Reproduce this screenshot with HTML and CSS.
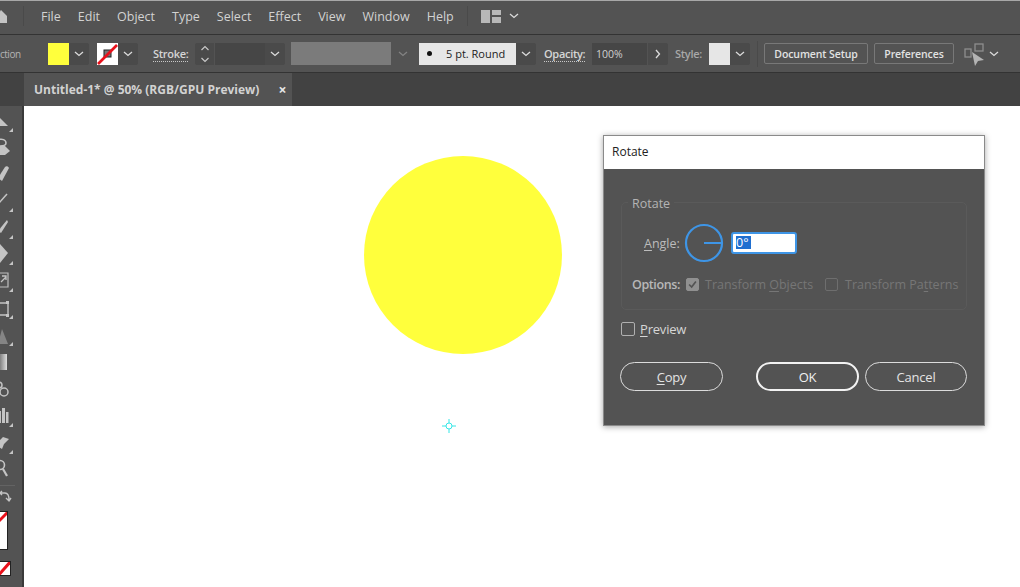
FILE: index.html
```html
<!DOCTYPE html>
<html lang="en">
<head>
<meta charset="utf-8">
<title>Rotate</title>
<link rel="stylesheet" href="styles.css">
</head>
<body>
<div class="app">
  <header class="menubar">
    <svg class="home" width="8" height="16" viewBox="0 0 8 16"><path d="M-4 8 L1 2 L7 8 L7 15 L-4 15 Z" fill="#c4c4c4"/></svg>
    <span class="vsep menu-sep"></span>
    <nav class="menu">
      <span>File</span><span>Edit</span><span>Object</span><span>Type</span><span>Select</span><span>Effect</span><span>View</span><span>Window</span><span>Help</span>
    </nav>
    <span class="vsep layout-sep"></span>
    <svg class="layout-icon" width="20" height="13" viewBox="0 0 20 13"><path d="M0 0h9v13H0z" fill="#b8b8b8"/><path d="M11 0h9v5h-9zM11 7h9v6h-9z" fill="#b8b8b8"/></svg>
    <svg class="chev layout-chev" width="10" height="6" viewBox="0 0 10 6"><path d="M1 1l4 3.5L9 1" /></svg>
  </header>

  <div class="controlbar">
    <span class="clip-label">ction</span>
    <div class="combo c-fill">
      <span class="swatch yellow"></span>
      <span class="drop"><svg class="chev" width="10" height="6" viewBox="0 0 10 6"><path d="M1 1l4 3.5L9 1"/></svg></span>
    </div>
    <div class="combo c-stroke">
      <span class="swatch none-swatch">
        <svg width="21" height="22" viewBox="0 0 21 22"><rect x="7" y="7" width="7" height="7" fill="#777" stroke="#222"/><path d="M1 21L20 2" stroke="#e8111b" stroke-width="2.600"/></svg>
      </span>
      <span class="drop"><svg class="chev" width="10" height="6" viewBox="0 0 10 6"><path d="M1 1l4 3.5L9 1"/></svg></span>
    </div>
    <span class="link-label stroke-label">Stroke:</span>
    <div class="combo c-weight">
      <span class="spin"><svg width="10" height="20" viewBox="0 0 10 20"><path d="M1.500 6L5 2.500 8.500 6M1.500 14L5 17.500 8.500 14" fill="none" stroke="#c8c8c8" stroke-width="1.200"/></svg></span>
      <span class="field weight-field"></span>
      <span class="drop"><svg class="chev" width="10" height="6" viewBox="0 0 10 6"><path d="M1 1l4 3.5L9 1"/></svg></span>
    </div>
    <div class="profile"></div>
    <svg class="chev dim-chev" width="10" height="6" viewBox="0 0 10 6"><path d="M1 1l4 3.5L9 1"/></svg>
    <div class="combo c-brush">
      <span class="brush"><i class="dot"></i><b>5 pt. Round</b></span>
      <span class="drop"><svg class="chev" width="10" height="6" viewBox="0 0 10 6"><path d="M1 1l4 3.5L9 1"/></svg></span>
    </div>
    <span class="link-label opacity-label">Opacity:</span>
    <div class="combo c-opacity">
      <span class="field opacity-field">100%</span>
      <span class="drop"><svg width="6" height="10" viewBox="0 0 6 10"><path d="M1 1l3.500 4L1 9" fill="none" stroke="#dcdcdc" stroke-width="1.300"/></svg></span>
    </div>
    <span class="plain-label">Style:</span>
    <div class="combo c-style">
      <span class="swatch style-swatch"></span>
      <span class="drop"><svg class="chev" width="10" height="6" viewBox="0 0 10 6"><path d="M1 1l4 3.5L9 1"/></svg></span>
    </div>
    <span class="vsep ctl-sep"></span>
    <button class="ctl-btn doc-btn">Document Setup</button>
    <button class="ctl-btn pref-btn">Preferences</button>
    <svg class="arrange" width="22" height="24" viewBox="0 0 22 24"><g fill="none" stroke="#8e8e8e" stroke-width="1.300"><rect x="1" y="6" width="6" height="8"/><rect x="11" y="1" width="8" height="7"/></g><path d="M8 9l12 8-6 1-3 5z" fill="#b4b4b4"/></svg>
    <svg class="chev arrange-chev" width="10" height="6" viewBox="0 0 10 6"><path d="M1 1l4 3.5L9 1"/></svg>
  </div>

  <div class="tabbar">
    <div class="tab"><span class="tab-title">Untitled-1* @ 50% (RGB/GPU Preview)</span><span class="tab-close">×</span></div>
  </div>

  <div class="workspace">
    <aside class="toolbar">
      <svg class="tool" viewBox="0 0 22 27"><path d="M-2 10l10 10H-2z" class="f"/><path class="tri" d="M13 22v4h-4z"/></svg>
      <svg class="tool" viewBox="0 0 22 27"><path d="M-2 13c0 0 5 0 7 0l5 5-5 4-7 0z" class="f"/><path d="M-2 7c4-2 8 0 8 3s-4 3-6 3" fill="none" stroke="#c4c4c4" stroke-width="1.500"/></svg>
      <svg class="tool" viewBox="0 0 22 27"><path d="M-2 18L5 7c1-1 3-1 4 1l-7 13z" class="f"/></svg>
      <svg class="tool" viewBox="0 0 22 27"><path d="M-2 17L7 7" fill="none" stroke="#c4c4c4" stroke-width="1.500"/><path class="tri" d="M13 21v4h-4z"/></svg>
      <svg class="tool" viewBox="0 0 22 27"><path d="M-2 17L7 6l1 2-7 11z" class="f"/><path class="tri" d="M13 21v4h-4z"/></svg>
      <svg class="tool" viewBox="0 0 22 27"><path d="M0 3l8 9-8 10-4-10z" class="f"/><path class="tri" d="M13 20v4h-4z"/></svg>
      <svg class="tool" viewBox="0 0 22 27"><path d="M-2 5h10v14H-2z" fill="none" stroke="#bdbdbd" stroke-width="1.200"/><path d="M1 14l5-5M2 8h4v4" fill="none" stroke="#c4c4c4" stroke-width="1.300"/><path class="tri" d="M13 20v4h-4z"/></svg>
      <svg class="tool" viewBox="0 0 22 27"><path d="M-2 8h10v12H-2z" fill="none" stroke="#c4c4c4" stroke-width="1.400"/><path d="M6 6h3v3H6zM6 19h3v3H6z" class="f"/><path class="tri" d="M13 20v4h-4z"/></svg>
      <svg class="tool" viewBox="0 0 22 27"><path d="M-2 22L2 7l6 15z" fill="#858585"/><path class="tri" d="M13 20v4h-4z"/></svg>
      <svg class="tool" viewBox="0 0 22 27"><defs><linearGradient id="g1"><stop offset="0" stop-color="#666"/><stop offset="1" stop-color="#ddd"/></linearGradient></defs><path d="M-2 5h9v16H-2z" fill="url(#g1)"/></svg>
      <svg class="tool" viewBox="0 0 22 27"><circle cx="4" cy="16" r="4" fill="none" stroke="#c4c4c4" stroke-width="1.500"/><circle cx="-1" cy="9" r="3" fill="none" stroke="#c4c4c4" stroke-width="1.500"/></svg>
      <svg class="tool" viewBox="0 0 22 27"><path d="M-1 8h2v12h-2zM2 5h3v15H2zM6 9h2.500v11H6z" class="f"/><path class="tri" d="M13 20v4h-4z"/></svg>
      <svg class="tool" viewBox="0 0 22 27"><path d="M-1 11L3 7l6 2-5 5-2 5-3-2z" class="f"/><path class="tri" d="M13 20v4h-4z"/></svg>
      <svg class="tool" viewBox="0 0 22 27"><circle cx="0" cy="8" r="4.500" fill="none" stroke="#c4c4c4" stroke-width="1.600"/><path d="M3 12l4 7" stroke="#c4c4c4" stroke-width="2.200"/></svg>
      <div class="tool-rule"></div>
      <svg class="swap" width="22" height="16" viewBox="0 0 22 16"><path d="M0 3h5c3 0 4 2 4 7M6 8l3 3 2-3M2 1L0 3l2 2" fill="none" stroke="#c4c4c4" stroke-width="1.400"/></svg>
      <div class="big-none"><svg width="8" height="38" viewBox="0 0 8 38"><path d="M-6 14L10-2" stroke="#e8111b" stroke-width="3"/></svg></div>
      <div class="small-none"><svg width="10" height="14" viewBox="0 0 10 14"><path d="M-3 15L11-1" stroke="#e8111b" stroke-width="3"/></svg></div>
    </aside>
    <div class="rule-edge"></div>
    <main class="canvas">
      <div class="circle"></div>
      <svg class="reticle" width="16" height="16" viewBox="0 0 16 16"><g fill="none" stroke="#35e6e6"><circle cx="8" cy="8" r="3"/><path d="M8 1v4M8 11v4M1 8h4M11 8h4"/></g></svg>
      <section class="dialog">
        <div class="dlg-title">Rotate</div>
        <div class="dlg-body">
          <div class="group">
            <span class="legend">Rotate</span>
            <div class="row angle-row">
              <label class="angle-label"><u>A</u>ngle:</label>
              <svg class="dial" width="40" height="40" viewBox="0 0 40 40"><circle cx="20" cy="20" r="18" fill="none" stroke="#3e95e6" stroke-width="2.200"/><path d="M20 20h18" stroke="#3e95e6" stroke-width="2"/></svg>
              <span class="angle-input"><span class="sel">0°</span></span>
            </div>
            <div class="row options-row">
              <span class="opt-label">Options:</span>
              <span class="check on"><svg width="11" height="11" viewBox="0 0 13 13"><path d="M2.500 6.500l3 3 5-6.500" fill="none" stroke="#535353" stroke-width="2"/></svg></span>
              <span class="opt-text obj">Transform <u>O</u>bjects</span>
              <span class="check off"></span>
              <span class="opt-text pat">Transform Pa<u>t</u>terns</span>
            </div>
          </div>
          <div class="row preview-row">
            <span class="check prev"></span>
            <span class="prev-text"><u>P</u>review</span>
          </div>
          <div class="row btn-row">
            <button class="pill copy"><u>C</u>opy</button>
            <button class="pill ok">OK</button>
            <button class="pill cancel">Cancel</button>
          </div>
        </div>
      </section>
    </main>
  </div>
</div>
</body>
</html>
```
FILE: styles.css
```css
* { box-sizing: border-box; }
html, body { margin: 0; height: 100%; }
body { font-family: "Open Sans", "Noto Sans", sans-serif; font-size: 12px; overflow: hidden; background: #fff; }
.app { width: 1020px; height: 587px; display: flex; flex-direction: column; overflow: hidden; }
u { text-underline-offset: 2px; }
.chev path { fill: none; stroke: #dcdcdc; stroke-width: 1.300; }

.menubar { height: 35px; flex: none; display: flex; align-items: center; background: #535353; border-top: 1px solid #a8a8a8; border-bottom: 1px solid #333; padding-bottom: 3px; color: #d2d2d2; font-size: 12.500px; }
.home { flex: none; }
.vsep { display: block; width: 1px; flex: none; background: #4a4a4a; }
.menu-sep { height: 20px; margin-left: 15px; }
.menu { display: flex; margin-left: 17px; gap: 17px; }
.layout-sep { height: 20px; margin-left: 13px; }
.layout-icon { margin-left: 13px; flex: none; }
.layout-chev { margin-left: 8px; flex: none; }

.controlbar { height: 38px; flex: none; display: flex; align-items: center; background: #535353; border-bottom: 1px solid #333; color: #d0d0d0; font-size: 11px; }
.clip-label { width: 20px; color: #b4b4b4; flex: none; white-space: nowrap; font-size: 10px; letter-spacing: -.5px; }
.combo { display: flex; height: 22px; flex: none; background: #4a4a4a; border-radius: 2px; }
.drop { width: 20px; display: flex; align-items: center; justify-content: center; }
.swatch { display: block; width: 21px; height: 22px; }
.yellow { background: #ffff3c; }
.c-fill { margin-left: 28px; }
.c-stroke { margin-left: 8px; }
.none-swatch { background: #fff; overflow: hidden; }
.none-swatch svg { display: block; }
.link-label { text-decoration: underline dotted #c8c8c8; text-underline-offset: 3px; color: #d6d6d6; flex: none; font-weight: 600; }
.stroke-label { margin-left: 15px; width: 36px; letter-spacing: -.3px; }
.c-weight { margin-left: 6px; }
.spin { width: 20px; display: flex; align-items: center; justify-content: center; border-right: 1px solid #535353; }
.field { display: block; background: #464646; }
.weight-field { width: 50px; }
.profile { width: 100px; height: 23px; margin-left: 6px; flex: none; background: #7b7b7b; }
.dim-chev { margin-left: 7px; flex: none; opacity: .35; }
.c-brush { margin-left: 11px; }
.brush { width: 97px; display: flex; align-items: center; background: #e6e6e6; color: #222; }
.dot { width: 5px; height: 5px; margin-left: 8px; border-radius: 50%; background: #111; flex: none; }
.brush b { margin-left: 14px; font-weight: 500; font-size: 11px; white-space: nowrap; }
.opacity-label { margin-left: 8px; width: 43px; letter-spacing: -.3px; }
.c-opacity { margin-left: 5px; }
.opacity-field { width: 56px; padding-left: 4px; line-height: 22px; border-right: 1px solid #535353; font-size: 10.500px; }
.plain-label { margin-left: 7px; width: 27px; color: #a8a8a8; flex: none; font-weight: 600; letter-spacing: -.3px; }
.c-style { margin-left: 7px; }
.style-swatch { background: #e6e6e6; }
.ctl-sep { height: 26px; margin-left: 7px; }
.ctl-btn { height: 21px; padding: 0; flex: none; background: transparent; border: 1px solid #787878; border-radius: 2px; color: #e2e2e2; font: 600 10.500px "Open Sans", sans-serif; letter-spacing: -.1px; }
.doc-btn { width: 104px; margin-left: 6px; }
.pref-btn { width: 80px; margin-left: 6px; }
.arrange { margin-left: 10px; flex: none; position: relative; top: 1px; }
.arrange-chev { margin-left: 3px; flex: none; }

.tabbar { height: 33px; flex: none; background: #424242; padding-left: 24px; }
.tab { width: 268px; height: 100%; display: flex; align-items: center; background: #535353; padding-left: 10px; color: #d2d2d2; font-weight: 700; font-size: 12px; }
.tab-title { white-space: nowrap; }
.tab-close { margin-left: 19px; color: #e6e6e6; font-size: 14px; font-weight: 700; line-height: 1; }

.workspace { flex: 1; display: flex; min-height: 0; }
.toolbar { width: 22px; flex: none; background: #535353; overflow: hidden; display: flex; flex-direction: column; }
.tool { display: block; width: 22px; height: 27px; flex: none; }
.tool .f { fill: #c4c4c4; }
.tri { fill: #c4c4c4; }
.tool-rule { width: 15px; height: 1px; flex: none; background: #636363; margin-top: 1px; }
.swap { display: block; flex: none; margin-top: 4px; }
.big-none { width: 8px; height: 39px; margin-top: 5px; flex: none; background: #fff; border: 1px solid #222; border-left: 0; overflow: hidden; }
.small-none { width: 11px; height: 15px; margin-top: 11px; flex: none; background: #fff; border: 1px solid #222; border-left: 0; overflow: hidden; }
.big-none svg, .small-none svg { display: block; }
.rule-edge { width: 2px; flex: none; background: #3a3a3a; }

.canvas { flex: 1; background: #fff; position: relative; }
.circle { position: absolute; left: 340px; top: 50px; width: 198px; height: 198px; border-radius: 50%; background: #ffff3c; }
.reticle { position: absolute; left: 417px; top: 312px; }

.dialog { position: absolute; left: 579px; top: 29px; width: 382px; height: 291px; border: 1px solid #8a8a8a; background: #535353; box-shadow: 0 1px 6px rgba(0,0,0,.35); display: flex; flex-direction: column; }
.dlg-title { height: 33px; flex: none; background: #fff; color: #222; font-size: 12px; line-height: 32px; padding-left: 8px; }
.dlg-body { flex: 1; padding: 33px 16px 0; }
.group { position: relative; height: 108px; margin: 0 1px; border: 1px solid #5a5a5a; border-radius: 5px; padding: 0 0 0 10px; }
.legend { position: absolute; left: 6px; top: -8px; padding: 0 4px; background: #535353; color: #b4b4b4; font-size: 12.500px; line-height: 18px; }
.row { display: flex; align-items: center; }
.angle-row { padding-top: 20px; height: 60px; }
.angle-label { margin-left: 12px; width: 40px; color: #bcbcbc; font-size: 12.500px; }
.dial { flex: none; }
.angle-input { display: block; width: 66px; height: 22px; margin-left: 7px; background: #fff; border: 2px solid #3e95e6; border-radius: 3px; padding: 2px 0 0 3px; font-size: 12.500px; line-height: 13px; }
.sel { display: inline-block; width: 15px; height: 13px; background: #1f6fd0; color: #fff; }
.options-row { margin-top: 11px; height: 20px; }
.opt-label { width: 54px; color: #b8b8b8; font-weight: 600; font-size: 12.500px; letter-spacing: -.4px; }
.check { display: block; flex: none; width: 13px; height: 13px; border-radius: 2px; border: 1px solid #6e6e6e; }
.check.on { background: #909090; border-color: #909090; }
.check.on svg { display: block; }
.opt-text { margin-left: 6px; color: #767676; font-size: 12.500px; white-space: nowrap; }
.opt-text.obj { width: 120px; }
.opt-text.pat { margin-left: 7px; }
.preview-row { margin-top: 10px; height: 18px; padding-left: 1px; }
.check.prev { width: 14px; height: 14px; border-color: #b0b0b0; }
.prev-text { margin-left: 5px; color: #d6d6d6; font-size: 13px; letter-spacing: -.2px; }
.btn-row { margin-top: 24px; }
.pill { height: 29px; width: 103px; padding: 0; flex: none; background: transparent; border: 1.500px solid #dcdcdc; border-radius: 15px; color: #e4e4e4; font: 400 13px "Open Sans", sans-serif; letter-spacing: -.2px; }
.pill.ok { margin-left: 33px; width: 103px; border: 2px solid #f2f2f2; color: #f0f0f0; }
.pill.cancel { margin-left: 6px; width: 102px; }
```
